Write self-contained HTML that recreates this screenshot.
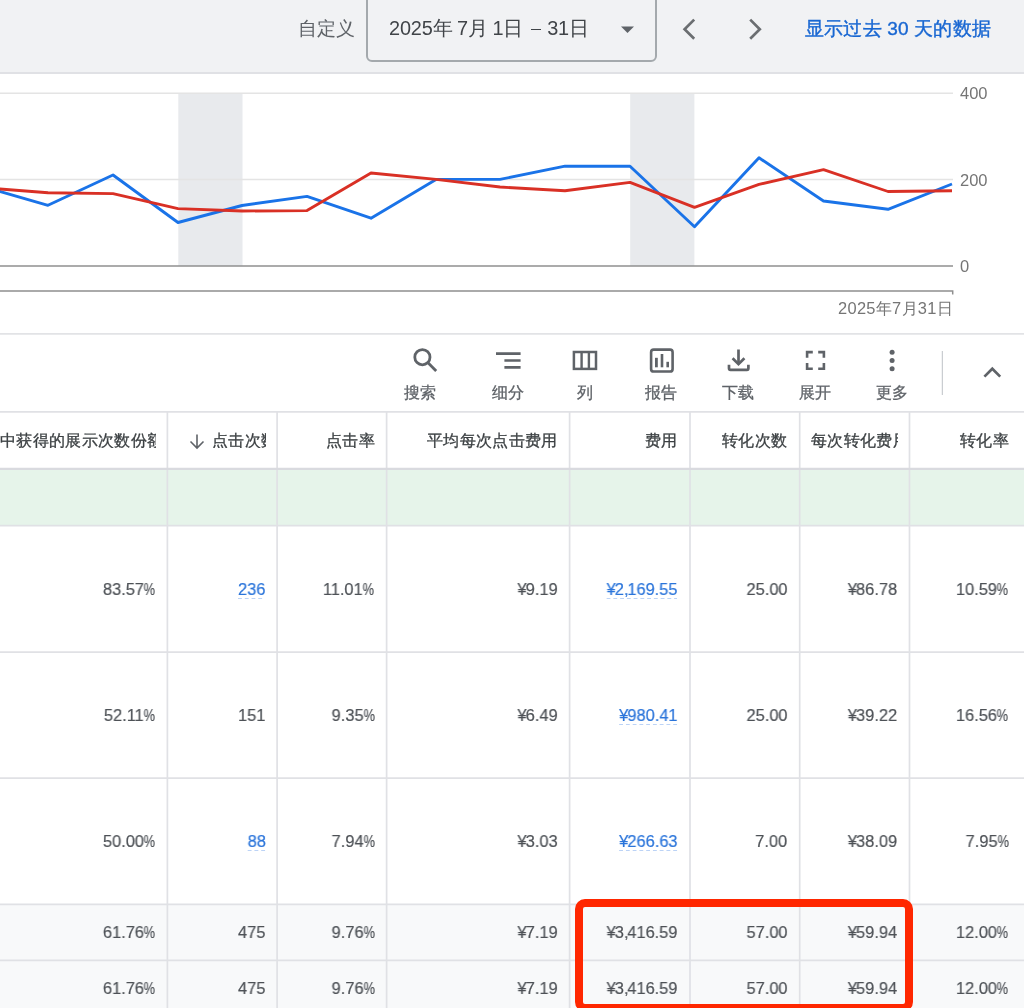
<!DOCTYPE html>
<html><head><meta charset="utf-8">
<style>
*{box-sizing:border-box;margin:0;padding:0}
html,body{width:1024px;height:1008px;overflow:hidden;background:#fff}
body{position:relative;font-family:"Liberation Sans",sans-serif;color:#3c4043}
.a{position:absolute}
.t{position:absolute;white-space:nowrap;line-height:1;will-change:transform}
.r{text-align:right}
.hl{position:absolute;left:0;width:1024px;height:1px;background:#dfe0e4}
.vl{position:absolute;width:1px;background:#dfe0e4}
.num{font-size:17px;letter-spacing:0px;color:#4d5156;-webkit-text-stroke:0.2px currentColor;transform:scaleX(.965);transform-origin:100% 50%}
.pc{display:inline-block;transform:scaleX(.78);transform-origin:100% 50%;margin-left:-3.3px}
.hd{font-size:16.4px;letter-spacing:0.35px;color:#3c4043;-webkit-text-stroke:0.3px #3c4043}
.lk{color:#2a74da}
.ul{background-image:linear-gradient(to right,#bcd3f6 62%,transparent 62%);background-size:7px 1px;background-repeat:repeat-x;background-position:0 100%;padding-bottom:0}
.cm{margin-right:-1.3px}.yn{margin-right:-0.9px}.pd{margin-right:-0.2px}
.tb{position:absolute;font-size:16.4px;letter-spacing:0.2px;-webkit-text-stroke:0.3px #5f6368;color:#5f6368;line-height:1;white-space:nowrap;will-change:transform}
</style></head><body>

<!-- top bar -->
<div class="a" style="left:0;top:0;width:1024px;height:72px;background:#f1f2f4"></div>
<div class="hl" style="top:72px;height:2px;background:#e0e1e5"></div>
<div class="t" style="left:297.5px;top:19px;font-size:19.2px;letter-spacing:0.1px;color:#5f6368">自定义</div>
<div class="a" style="left:366px;top:-6px;width:290.5px;height:68px;border:2px solid #a4a9ad;border-radius:6px"></div>
<div class="t" style="left:388.8px;top:18.5px;font-size:19.9px;color:#404448;letter-spacing:-0.15px;word-spacing:-0.8px">2025年 7月 1日<span style="display:inline-block;width:24px;height:19px;position:relative;vertical-align:top"><span style="position:absolute;left:7.8px;top:9.6px;width:9.6px;height:1.7px;background:#404448"></span></span>31日</div>
<svg class="a" style="left:619px;top:24px" width="17" height="11"><path d="M2 2.5h13l-6.5 6.5z" fill="#5f6368"/></svg>
<svg class="a" style="left:0;top:0" width="1024" height="60"><path d="M694.2 19.6L684.6 29.2L694.2 38.8M750.2 19.6L759.8 29.2L750.2 38.8" fill="none" stroke="#6b6e71" stroke-width="2.7"/></svg>
<div class="t lk" style="left:805px;top:19px;font-size:19px;-webkit-text-stroke:0.4px #1967d2;color:#1967d2;letter-spacing:0.2px">显示过去 30 天的数据</div>

<!-- chart -->
<svg class="a" style="left:0;top:0" width="1024" height="340">
  <rect x="178.3" y="93" width="64.2" height="173" fill="#e8eaed"/>
  <rect x="630.2" y="93" width="64.2" height="173" fill="#e8eaed"/>
  <line x1="0" y1="93.2" x2="953" y2="93.2" stroke="#e4e4e4" stroke-width="1.5"/>
  <line x1="0" y1="179.5" x2="953" y2="179.5" stroke="#e4e4e4" stroke-width="1.5"/>
  <line x1="0" y1="266" x2="953" y2="266" stroke="#8f8f8f" stroke-width="1.5"/>
  <path d="M0 291H952.7V294.5" fill="none" stroke="#8f8f8f" stroke-width="1.5"/>
  <polyline fill="none" stroke="#1a73e8" stroke-width="2.9" stroke-linejoin="round"
    points="-16,187 48,205.3 113,175 178,222.5 242,205.5 307,196.4 371,218.2 436,179.4 500,179.4 565,166.2 630,166.2 694.5,226.8 759,157.8 823.5,201 888,209.3 952,184"/>
  <polyline fill="none" stroke="#d93025" stroke-width="2.9" stroke-linejoin="round"
    points="-16,187.7 48,192.8 113,193.6 178,208.6 242,211 307,210.6 371,173 436,179.4 500,187 565,190.8 630,182.4 694.5,207.3 759,184.4 823.5,169.7 888,191.5 952,190.8"/>
</svg>
<div class="t" style="left:960px;top:85px;font-size:16.5px;color:#757575">400</div>
<div class="t" style="left:960px;top:172px;font-size:16.5px;color:#757575">200</div>
<div class="t" style="left:960px;top:258px;font-size:16.5px;color:#757575">0</div>
<div class="t r" style="right:70.7px;top:299.6px;font-size:16.45px;letter-spacing:0.3px;color:#757575">2025年7月31日</div>

<!-- toolbar -->
<svg class="a" style="left:0;top:334px" width="1024" height="78" viewBox="0 334 1024 78">
  <g fill="none" stroke="#5f6368" stroke-width="2.8">
    <circle cx="422.4" cy="357.2" r="7.6"/>
    <path d="M428 362.8L436.2 371"/>
    <path d="M496 353.6H520.6M504.4 360.5H520.6M504.4 367.4H520.6" stroke-width="2.6"/>
    <rect x="573.9" y="352" width="22.1" height="16.9" stroke-width="2.5"/>
    <path d="M581.6 352V369M588.9 352V369" stroke-width="2.4"/>
    <rect x="651.1" y="349.6" width="21.5" height="21.9" rx="2.6" stroke-width="2.6"/>
    <path d="M738.5 349.5V364" stroke-width="2.7"/>
    <path d="M732.6 358.2L738.5 364.1L744.4 358.2" stroke-width="2.7"/>
    <path d="M729 364.8V368.3Q729 369.8 730.5 369.8H746.9Q748.4 369.8 748.4 368.3V364.8" stroke-width="2.7"/>
    <path d="M807.1 357.8V352.1H812.8M818.2 352.1H823.9V357.8M823.9 363.1V368.8H818.2M812.8 368.8H807.1V363.1" stroke-width="2.6"/>
    <path d="M984.4 376.6L992.3 368.7L1000.2 376.6" stroke-width="2.7"/>
  </g>
  <g fill="#5f6368">
    <rect x="655" y="357.8" width="2.8" height="9.5"/>
    <rect x="660.7" y="354" width="2.6" height="13.3"/>
    <rect x="666.4" y="361.8" width="2.6" height="5.5"/>
    <circle cx="892.1" cy="352.2" r="2.5"/>
    <circle cx="892.1" cy="360.5" r="2.5"/>
    <circle cx="892.1" cy="368.7" r="2.5"/>
  </g>
  <rect x="941.8" y="351" width="1" height="44" fill="#bdc1c6"/>
</svg>
<div class="tb" style="left:404px;top:384px">搜索</div>
<div class="tb" style="left:492px;top:384px">细分</div>
<div class="tb" style="left:577px;top:384px">列</div>
<div class="tb" style="left:645px;top:384px">报告</div>
<div class="tb" style="left:722px;top:384px">下载</div>
<div class="tb" style="left:799px;top:384px">展开</div>
<div class="tb" style="left:876px;top:384px">更多</div>


<!-- table -->
<div class="a" style="left:0;top:470px;width:1024px;height:56px;background:#e6f4ea"></div>
<div class="a" style="left:0;top:905px;width:1024px;height:103px;background:#f8f9fa"></div>
<svg class="a" style="left:0;top:0" width="1024" height="1008"><g stroke="#e0e1e5" stroke-width="1.7" fill="none"><line x1="167.4" y1="412" x2="167.4" y2="1008"/><line x1="277.1" y1="412" x2="277.1" y2="1008"/><line x1="386.6" y1="412" x2="386.6" y2="1008"/><line x1="569.6" y1="412" x2="569.6" y2="1008"/><line x1="690" y1="412" x2="690" y2="1008"/><line x1="799.7" y1="412" x2="799.7" y2="1008"/><line x1="909.5" y1="412" x2="909.5" y2="1008"/><line x1="0" y1="525.6" x2="1024" y2="525.6"/><line x1="0" y1="652.1" x2="1024" y2="652.1"/><line x1="0" y1="778.2" x2="1024" y2="778.2"/><line x1="0" y1="904.3" x2="1024" y2="904.3"/><line x1="0" y1="960.4" x2="1024" y2="960.4"/><line x1="0" y1="411.8" x2="1024" y2="411.8"/></g><line x1="0" y1="468.9" x2="1024" y2="468.9" stroke="#d9dadf" stroke-width="2.4"/><line x1="0" y1="333.9" x2="1024" y2="333.9" stroke="#e2e3e6" stroke-width="1.8"/></svg>
<div class="t hd" style="left:0;top:431.8px;width:156px;overflow:hidden"><span style="position:relative;left:0px">中获得的展示次数份额</span></div>
<svg class="a" style="left:188px;top:432px" width="18" height="18"><path d="M9 2.5V16M2.5 9.5L9 16L15.5 9.5" fill="none" stroke="#5f6368" stroke-width="1.6"/></svg>
<div class="t hd" style="left:212px;top:431.8px;width:54px;overflow:hidden">点击次数</div>
<div class="t hd r" style="right:649.0px;top:431.8px">点击率</div>
<div class="t hd r" style="right:466.6px;top:431.8px">平均每次点击费用</div>
<div class="t hd r" style="right:346.1px;top:431.8px">费用</div>
<div class="t hd r" style="right:236.2px;top:431.8px">转化次数</div>
<div class="t hd r" style="right:14.8px;top:431.8px">转化率</div>
<div class="t hd" style="left:811px;top:431.8px;width:87px;overflow:hidden">每次转化费用</div>
<div class="t num r" style="right:868.5px;top:580.5px">83.57<span class="pc">%</span></div>
<div class="t num r lk" style="right:758.5px;top:580.5px"><span class="ul">236</span></div>
<div class="t num r" style="right:649.5px;top:580.5px">11.01<span class="pc">%</span></div>
<div class="t num r" style="right:466.5px;top:580.5px"><span class="yn">¥</span>9.19</div>
<div class="t num r lk" style="right:346.5px;top:580.5px"><span class="ul"><span class="yn">¥</span>2<span class="cm">,</span>169.55</span></div>
<div class="t num r" style="right:236.5px;top:580.5px">25.00</div>
<div class="t num r" style="right:126.5px;top:580.5px"><span class="yn">¥</span>86.78</div>
<div class="t num r" style="right:15.5px;top:580.5px">10.59<span class="pc">%</span></div>
<div class="t num r" style="right:868.5px;top:706.5px">52.11<span class="pc">%</span></div>
<div class="t num r" style="right:758.5px;top:706.5px">151</div>
<div class="t num r" style="right:649.5px;top:706.5px">9.35<span class="pc">%</span></div>
<div class="t num r" style="right:466.5px;top:706.5px"><span class="yn">¥</span>6.49</div>
<div class="t num r lk" style="right:346.5px;top:706.5px"><span class="ul"><span class="yn">¥</span>980.41</span></div>
<div class="t num r" style="right:236.5px;top:706.5px">25.00</div>
<div class="t num r" style="right:126.5px;top:706.5px"><span class="yn">¥</span>39.22</div>
<div class="t num r" style="right:15.5px;top:706.5px">16.56<span class="pc">%</span></div>
<div class="t num r" style="right:868.5px;top:832.5px">50.00<span class="pc">%</span></div>
<div class="t num r lk" style="right:758.5px;top:832.5px"><span class="ul">88</span></div>
<div class="t num r" style="right:649.5px;top:832.5px">7.94<span class="pc">%</span></div>
<div class="t num r" style="right:466.5px;top:832.5px"><span class="yn">¥</span>3.03</div>
<div class="t num r lk" style="right:346.5px;top:832.5px"><span class="ul"><span class="yn">¥</span>266.63</span></div>
<div class="t num r" style="right:236.5px;top:832.5px">7.00</div>
<div class="t num r" style="right:126.5px;top:832.5px"><span class="yn">¥</span>38.09</div>
<div class="t num r" style="right:15.5px;top:832.5px">7.95<span class="pc">%</span></div>
<div class="t num r" style="right:868.5px;top:923.8px">61.76<span class="pc">%</span></div>
<div class="t num r" style="right:758.5px;top:923.8px">475</div>
<div class="t num r" style="right:649.5px;top:923.8px">9.76<span class="pc">%</span></div>
<div class="t num r" style="right:466.5px;top:923.8px"><span class="yn">¥</span>7.19</div>
<div class="t num r" style="right:346.5px;top:923.8px"><span class="yn">¥</span>3<span class="cm">,</span>416.59</div>
<div class="t num r" style="right:236.5px;top:923.8px">57.00</div>
<div class="t num r" style="right:126.5px;top:923.8px"><span class="yn">¥</span>59.94</div>
<div class="t num r" style="right:15.5px;top:923.8px">12.00<span class="pc">%</span></div>
<div class="t num r" style="right:868.5px;top:979.9px">61.76<span class="pc">%</span></div>
<div class="t num r" style="right:758.5px;top:979.9px">475</div>
<div class="t num r" style="right:649.5px;top:979.9px">9.76<span class="pc">%</span></div>
<div class="t num r" style="right:466.5px;top:979.9px"><span class="yn">¥</span>7.19</div>
<div class="t num r" style="right:346.5px;top:979.9px"><span class="yn">¥</span>3<span class="cm">,</span>416.59</div>
<div class="t num r" style="right:236.5px;top:979.9px">57.00</div>
<div class="t num r" style="right:126.5px;top:979.9px"><span class="yn">¥</span>59.94</div>
<div class="t num r" style="right:15.5px;top:979.9px">12.00<span class="pc">%</span></div>
<div class="a" style="left:575px;top:899px;width:338px;height:113px;border:8.2px solid #ff2700;border-radius:10px"></div>

</body></html>
